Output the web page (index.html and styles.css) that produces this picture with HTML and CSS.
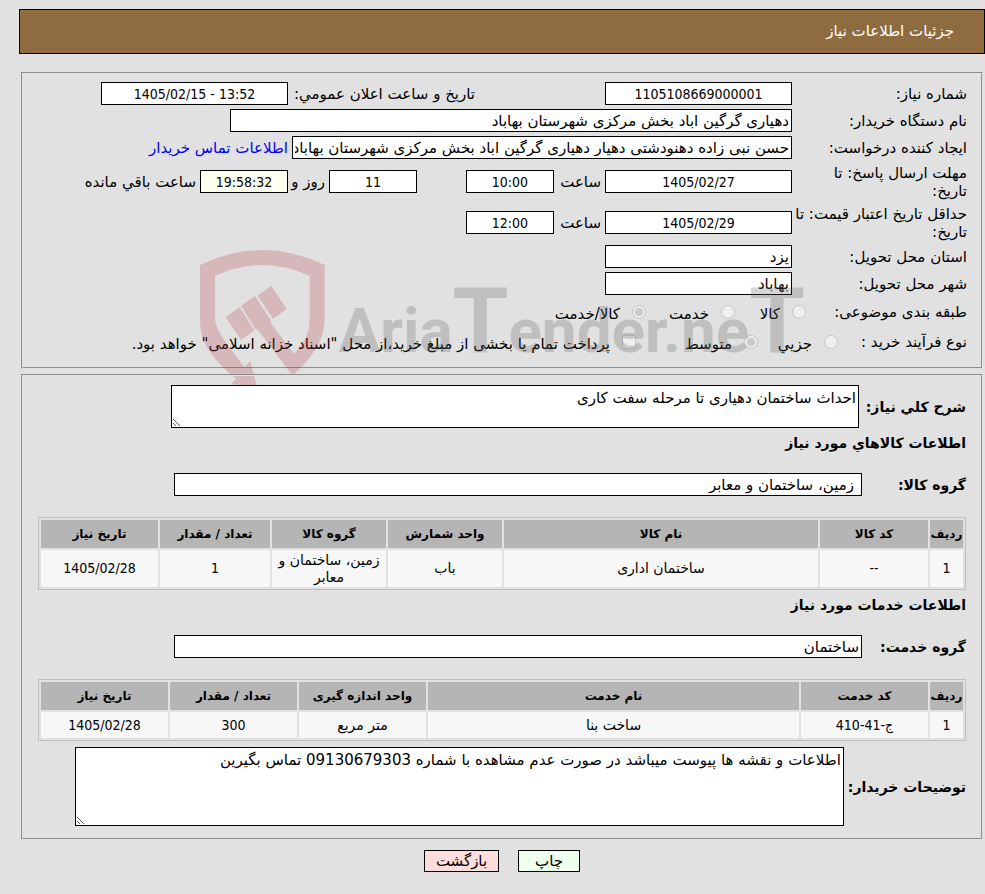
FILE: index.html
```html
<!DOCTYPE html>
<html lang="fa" dir="rtl">
<head>
  <meta charset="UTF-8">
  <title>جزئیات اطلاعات نیاز</title>
  <link rel="stylesheet" href="styles.css">
</head>
<body>
  <header class="page-title">جزئیات اطلاعات نیاز</header>

  <form class="content">
    <fieldset class="panel need-info">
      <div class="row">
        <label class="caption" for="needNo">شماره نیاز:</label>
        <input class="box num w-md" id="needNo" type="text" value="1105108669000001" readonly>
        <label class="announce" for="announceDate">تاریخ و ساعت اعلان عمومي:</label>
        <input class="box num w-md" id="announceDate" type="text" dir="ltr" value="1405/02/15 - 13:52" readonly>
      </div>
      <div class="row">
        <label class="caption" for="buyerOrg">نام دستگاه خریدار:</label>
        <input class="box w-xl" id="buyerOrg" type="text" value="دهیاری گرگین اباد بخش مرکزی شهرستان بهاباد" readonly>
      </div>
      <div class="row">
        <label class="caption" for="creator">ایجاد کننده درخواست:</label>
        <input class="box w-lg" id="creator" type="text" value="حسن نبی زاده دهنودشتی دهیار دهیاری گرگین اباد بخش مرکزی شهرستان بهاباد" readonly>
        <a class="contact" href="#">اطلاعات تماس خریدار</a>
      </div>
      <div class="row row-tall">
        <label class="caption" for="replyDate">مهلت ارسال پاسخ: تا<br>تاریخ:</label>
        <input class="box num w-md" id="replyDate" type="text" value="1405/02/27" readonly>
        <label class="hour" for="replyHour">ساعت</label>
        <input class="box num w-sm" id="replyHour" type="text" value="10:00" readonly>
        <input class="box num w-sm days" id="daysLeft" type="text" value="11" readonly>
        <label class="day-label" for="daysLeft">روز و</label>
        <input class="box num w-sm timer" id="timeLeft" type="text" value="19:58:32" readonly>
        <label class="left-label" for="timeLeft">ساعت باقي مانده</label>
      </div>
      <div class="row row-tall">
        <label class="caption" for="validDate">حداقل تاریخ اعتبار قیمت: تا<br>تاریخ:</label>
        <input class="box num w-md" id="validDate" type="text" value="1405/02/29" readonly>
        <label class="hour" for="validHour">ساعت</label>
        <input class="box num w-sm" id="validHour" type="text" value="12:00" readonly>
      </div>
      <div class="row">
        <label class="caption" for="province">استان محل تحویل:</label>
        <input class="box w-md" id="province" type="text" value="یزد" readonly>
      </div>
      <div class="row">
        <label class="caption" for="city">شهر محل تحویل:</label>
        <input class="box w-md" id="city" type="text" value="بهاباد" readonly>
      </div>
      <div class="row row-options">
        <span class="caption subject">طبقه بندی موضوعی:</span>
        <label class="option opt-1"><input type="radio" name="subject" disabled><span>کالا</span></label>
        <label class="option opt-2"><input type="radio" name="subject" disabled><span>خدمت</span></label>
        <label class="option"><input type="radio" name="subject" checked disabled><span>کالا/خدمت</span></label>
      </div>
      <div class="row row-options">
        <span class="caption process">نوع فرآیند خرید :</span>
        <label class="option opt-3"><input type="radio" name="process" disabled><span>جزیي</span></label>
        <label class="option opt-4"><input type="radio" name="process" checked disabled><span>متوسط</span></label>
        <label class="option"><input type="checkbox" disabled><span>پرداخت تمام یا بخشی از مبلغ خرید،از محل "اسناد خزانه اسلامی" خواهد بود.</span></label>
      </div>

      <svg class="watermark" viewBox="0 0 1920 600" direction="ltr" aria-hidden="true">
        <g class="shield">
          <path d="M60 75Q247-15 434 75V235C434 300 400 350 338 407L232 268H227L183 198L225 168L273 240L270 246L342 342C375 305 389 280 389 235V108Q247 42 105 108V235C108 280 150 320 193 382L211 364L231 440L153 432L168 416C100 360 60 310 60 240Z"/>
          <path d="M137 231L179 202L223 271L183 300Z"/>
          <path d="M233 167L273 137L320 207L279 236Z"/>
        </g>
        <text class="brand" x="476" y="336">Aria<tspan class="big">T</tspan>ender.ne<tspan class="big">T</tspan></text>
      </svg>
    </fieldset>

    <fieldset class="panel details">
      <div class="line">
        <label class="strong summary-label" for="summary">شرح کلي نیاز:</label>
        <textarea class="box summary" id="summary" readonly>احداث ساختمان دهیاری تا مرحله سفت کاری</textarea>
      </div>
      <h2>اطلاعات کالاهاي مورد نیاز</h2>
      <div class="line group">
        <label class="strong" for="goodsGroup">گروه کالا:</label>
        <input class="box goods" id="goodsGroup" type="text" value="زمین، ساختمان و معابر" readonly>
      </div>
      <table>
        <colgroup>
          <col class="c-row"><col class="c-code"><col><col class="c-unit"><col class="c-unit"><col class="c-count"><col class="c-date">
        </colgroup>
        <thead>
          <tr><th>ردیف</th><th>کد کالا</th><th>نام کالا</th><th>واحد شمارش</th><th>گروه کالا</th><th>تعداد / مقدار</th><th>تاریخ نیاز</th></tr>
        </thead>
        <tbody>
          <tr class="two-line"><td class="num">1</td><td class="num">--</td><td>ساختمان اداری</td><td>باب</td><td>زمین، ساختمان و معابر</td><td class="num">1</td><td class="num">1405/02/28</td></tr>
        </tbody>
      </table>
      <h2>اطلاعات خدمات مورد نیاز</h2>
      <div class="line group">
        <label class="strong" for="serviceGroup">گروه خدمت:</label>
        <input class="box" id="serviceGroup" type="text" value="ساختمان" readonly>
      </div>
      <table>
        <colgroup>
          <col class="c-row"><col class="c-wide"><col><col class="c-wide"><col class="c-wide"><col class="c-wide">
        </colgroup>
        <thead>
          <tr><th>ردیف</th><th>کد خدمت</th><th>نام خدمت</th><th>واحد اندازه گیری</th><th>تعداد / مقدار</th><th>تاریخ نیاز</th></tr>
        </thead>
        <tbody>
          <tr><td class="num">1</td><td class="num">ج-41-410</td><td>ساخت بنا</td><td>متر مربع</td><td class="num">300</td><td class="num">1405/02/28</td></tr>
        </tbody>
      </table>
      <div class="line notes-line">
        <label class="strong" for="notes">توضیحات خریدار:</label>
        <textarea class="box notes" id="notes" readonly>اطلاعات و نقشه ها پیوست میباشد در صورت عدم مشاهده با شماره 09130679303 تماس بگیرین</textarea>
      </div>
    </fieldset>

    <div class="actions">
      <button class="print" type="button">چاپ</button>
      <button class="back" type="button">بازگشت</button>
    </div>
  </form>
</body>
</html>
```
FILE: styles.css
```css
* { box-sizing: border-box; }
body {
  margin: 0;
  padding: 9px 0 0 19px;
  background: #e1e1e1;
  color: #000;
  font-family: "DejaVu Sans", sans-serif;
  font-size: 15px;
  line-height: 18px;
}
input, textarea, button {
  font: inherit;
  color: inherit;
}

/* title bar */
.page-title {
  height: 45px;
  padding: 0 30px;
  border: 1px solid #000;
  background: #8f6c40;
  color: #fff;
  line-height: 43px;
}

/* framed panels */
.content { padding: 18px 2px 0; }
.panel {
  position: relative;
  min-width: 0;
  margin: 0;
  padding: 6px 14px;
  border: 2px groove #e1e1e1;
}
.need-info { height: 297px; }
.details {
  margin-top: 5px;
  padding: 9px 15px 12px;
}

/* form rows */
.row {
  display: flex;
  align-items: center;
  min-height: 27px;
  white-space: nowrap;
}
.row-tall { min-height: 41px; }
.row-options { min-height: 30px; }
.caption {
  flex: none;
  width: 175px;
}
.box {
  flex: none;
  height: 23px;
  margin: 0;
  padding: 0 2px;
  border: 1px solid #000;
  border-radius: 0;
  background: #fff;
  outline: none;
}
.num {
  font-family: "DejaVu Sans Condensed", "DejaVu Sans", sans-serif;
  font-size: 14px;
  text-align: center;
}
.w-sm { width: 88px; }
.w-md { width: 187px; }
.w-lg { width: 500px; }
.w-xl { width: 562px; }
.announce {
  flex: none;
  width: 317px;
  padding-right: 130px;
}
.contact {
  margin-right: 4px;
  color: #00f;
  text-decoration: none;
}
.hour {
  flex: none;
  width: 51px;
  padding-right: 4px;
}
.days { margin-right: 49px; }
.day-label {
  flex: none;
  width: 41px;
  padding-right: 4px;
}
.left-label { padding-right: 4px; }
.timer { background: #ffffef; }

/* radio and checkbox options */
.subject { width: 161px; }
.process { width: 129px; }
.option {
  display: flex;
  flex: none;
  align-items: center;
}
.option input {
  width: 14px;
  height: 14px;
  margin: 0 0 0 12px;
}
.option span { padding-top: 4px; }
.opt-1 { width: 71px; }
.opt-2 { width: 89px; }
.opt-3 { width: 80px; }
.opt-4 { width: 122px; }

/* watermark over the first panel */
.watermark {
  position: absolute;
  top: 166px;
  left: 157px;
  width: 640px;
  height: 200px;
  pointer-events: none;
}
.shield { fill: rgba(185, 60, 70, 0.25); }
.brand {
  fill: rgba(90, 90, 90, 0.25);
  font-family: "Roboto", sans-serif;
  font-size: 186px;
  font-weight: bold;
}
.big { font-size: 270px; }

/* second panel */
.line {
  display: flex;
  align-items: center;
}
.line .box {
  flex: 1;
  min-width: 0;
  margin: 0 4px 0 135px;
}
.strong {
  flex: none;
  font-size: 14px;
  font-weight: bold;
}
.summary-label { width: 103px; }
.line .summary {
  height: 43px;
  margin-left: 133px;
  padding-top: 3px;
}
.group .strong { width: 100px; }
.group .box { margin-left: 136px; }
.line .goods { padding-right: 7px; }
.line .notes {
  height: 79px;
  margin-left: 37px;
  padding-top: 3px;
}
.notes-line { margin-top: 6px; }
h2 {
  margin: 6px 0 21px;
  font-size: 14px;
  line-height: 18px;
}
table {
  width: 100%;
  margin-top: 21px;
  border: 1px solid #bfbfbf;
  border-spacing: 2px;
  table-layout: fixed;
  font-size: 14px;
  line-height: 17px;
  text-align: center;
}
th, td { padding: 0; }
th {
  height: 28px;
  background: #b5b5b5;
  font-size: 12px;
}
td {
  height: 26px;
  background: #f7f7f7;
}
.two-line td { height: 37px; }
.c-row { width: 33px; }
.c-code { width: 108px; }
.c-unit { width: 114px; }
.c-count { width: 110px; }
.c-date { width: 117px; }
.c-wide { width: 127px; }

/* bottom buttons */
.actions {
  display: flex;
  justify-content: center;
  gap: 19px;
  padding: 10px 0 20px;
}
.actions button {
  height: 22px;
  padding: 0;
  border: 1px solid #000;
  line-height: 20px;
}
.print { width: 62px; background: #efe; }
.back { width: 75px; background: #fdd; }
```
